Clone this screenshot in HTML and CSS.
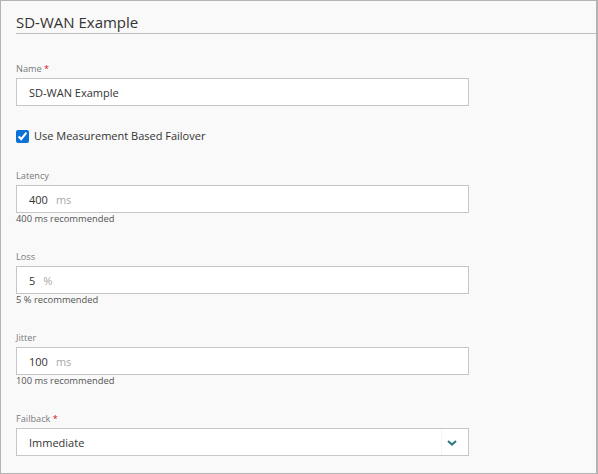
FILE: index.html
```html
<!DOCTYPE html>
<html>
<head>
<meta charset="utf-8">
<link rel="stylesheet" href="styles.css">
</head>
<body>
<div class="panel">
  <div class="header"><h1 class="title">SD-WAN Example</h1></div>
  <div class="form">
    <div class="field field-name">
      <label class="label">Name <span class="req">*</span></label>
      <div class="input"><span class="value">SD-WAN Example</span></div>
    </div>
    <div class="check-row">
      <input type="checkbox" class="checkbox" checked>
      <span class="check-label">Use Measurement Based Failover</span>
    </div>
    <div class="field">
      <label class="label">Latency</label>
      <div class="input"><span class="value">400</span><span class="unit">ms</span></div>
      <div class="help">400 ms recommended</div>
    </div>
    <div class="field">
      <label class="label">Loss</label>
      <div class="input"><span class="value">5</span><span class="unit">%</span></div>
      <div class="help">5 % recommended</div>
    </div>
    <div class="field">
      <label class="label">Jitter</label>
      <div class="input"><span class="value">100</span><span class="unit">ms</span></div>
      <div class="help">100 ms recommended</div>
    </div>
    <div class="field field-last">
      <label class="label">Failback <span class="req">*</span></label>
      <div class="input select">
        <span class="value">Immediate</span>
        <span class="select-btn">
          <svg width="10" height="6" viewBox="0 0 10 6"><path d="M1 1 L5 4.6 L9 1" fill="none" stroke="#2f7787" stroke-width="2"/></svg>
        </span>
      </div>
    </div>
  </div>
</div>
</body>
</html>
```

FILE: styles.css
```css
* { box-sizing: border-box; }
html, body { margin: 0; padding: 0; }
body {
  width: 598px;
  height: 474px;
  font-family: "Open Sans", "Noto Sans", sans-serif;
  color: #333;
}
.panel {
  width: 598px;
  height: 474px;
  background: #f9f9f9;
  border: 1px solid #b3b3b3;
  border-right-width: 2px;
  padding-top: 10px;
  padding-left: 15px;
}
.header {
  border-bottom: 1px solid #bdbdbd;
}
.title {
  margin: 0;
  font-size: 15px;
  line-height: 22px;
  font-weight: 400;
  color: #333;
}
.form {
  width: 453px;
  padding-top: 28px;
}
.field {
  display: flex;
  flex-direction: column;
  margin-bottom: 25px;
}
.field-name { margin-bottom: 22px; }
.field-last { margin-bottom: 0; margin-top: 1px; }
.label {
  font-size: 9.2px;
  line-height: 14px;
  color: #7a7a7a;
  margin-bottom: 2px;
}
.req { color: #d0111b; }
.input {
  height: 28px;
  background: #fff;
  border: 1px solid #c6c6c6;
  padding-left: 12px;
  display: flex;
  align-items: center;
  font-size: 11px;
  color: #333;
}
.unit {
  color: #a8a8a8;
  margin-left: 8px;
}
.help {
  font-size: 9.4px;
  line-height: 12px;
  color: #555;
}
.check-row {
  display: flex;
  align-items: center;
  height: 16px;
  margin-bottom: 25px;
}
.checkbox {
  width: 13px;
  height: 13px;
  margin: 0 5px 0 0;
  accent-color: #0a72d6;
}
.check-label {
  font-size: 11px;
  line-height: 16px;
  color: #333;
}
.select .value { flex: 1; }
.select-btn {
  height: 100%;
  padding: 0 11px 0 5px;
  border-left: 1px solid #f6f6f6;
  display: flex;
  align-items: center;
}
.select-btn svg { display: block; margin-top: 1px; }
```
